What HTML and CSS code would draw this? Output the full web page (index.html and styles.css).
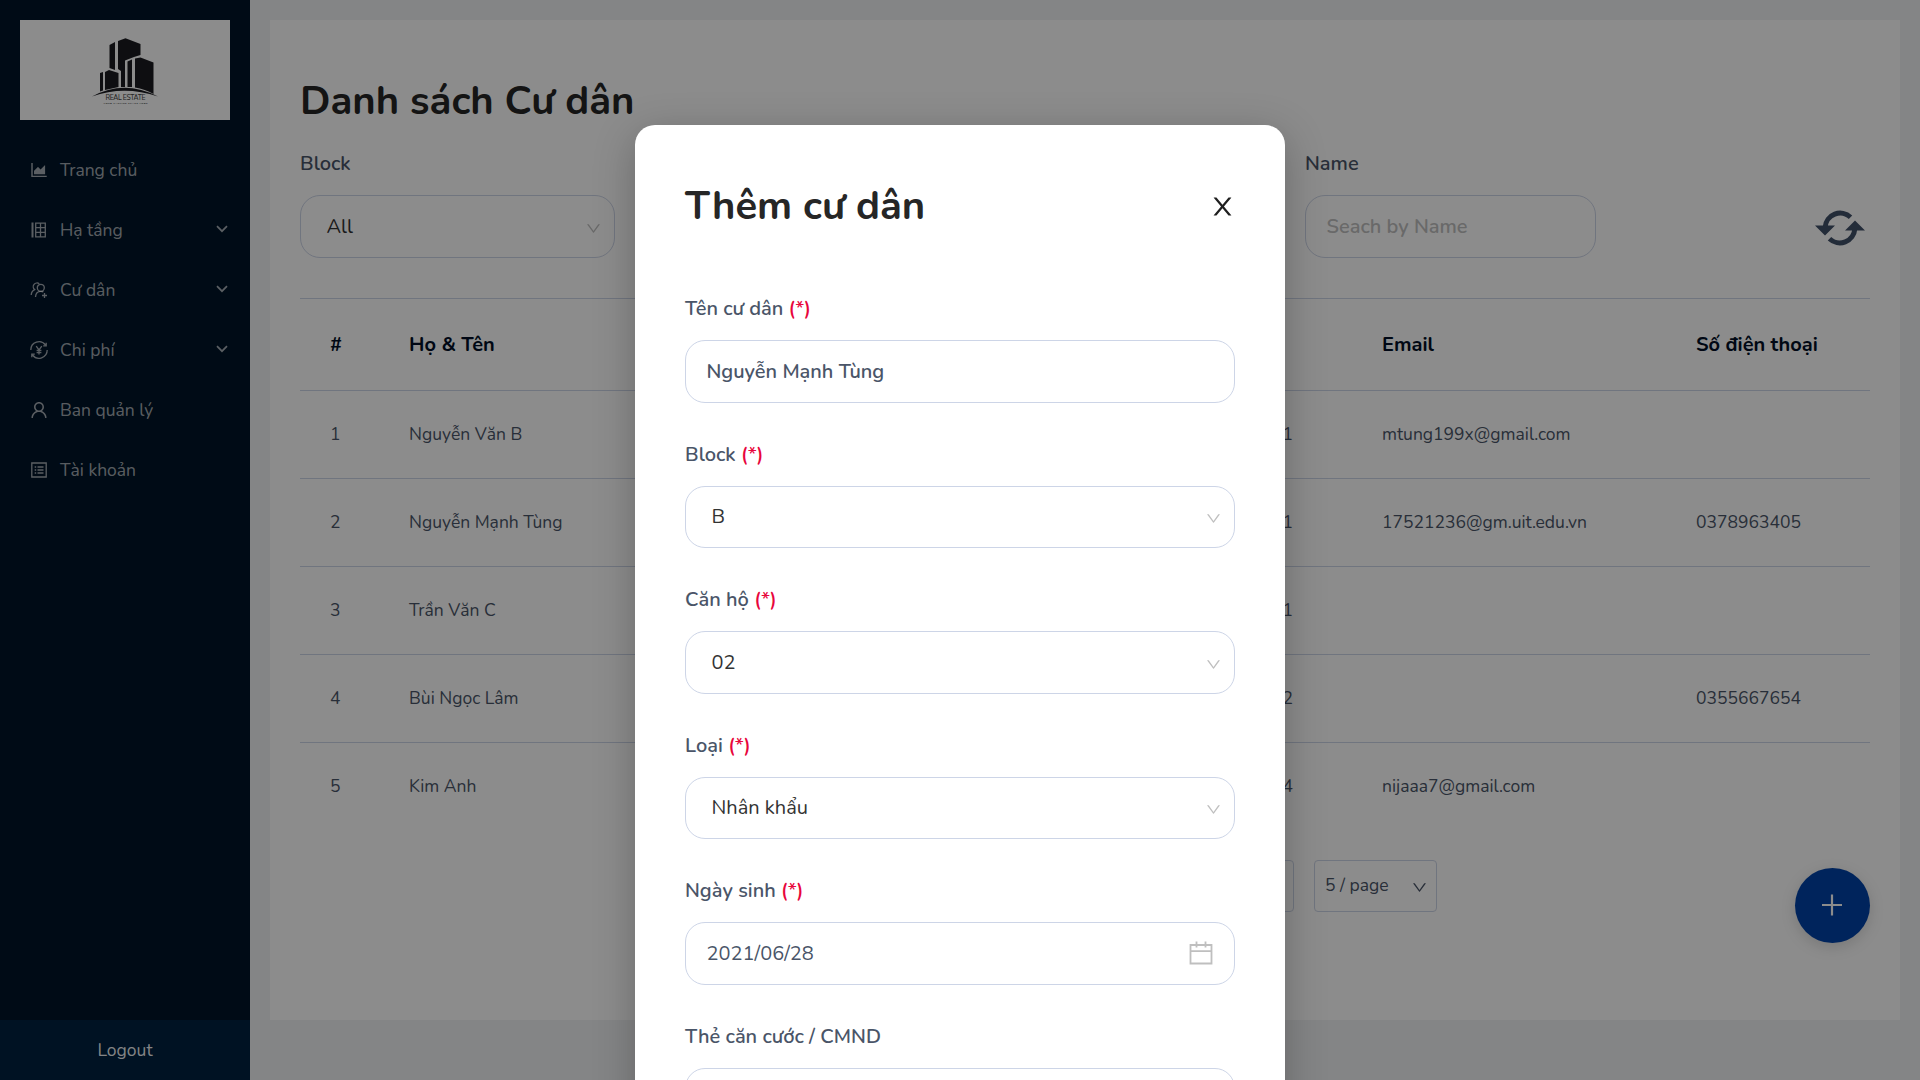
FILE: index.html
```html
<!DOCTYPE html>
<html lang="vi">
<head>
<meta charset="utf-8">
<title>Danh sách Cư dân</title>
<link rel="stylesheet" href="styles.css">
</head>
<body>
<svg class="defs" width="0" height="0">
  <symbol id="down" viewBox="64 64 896 896"><path d="M884 256h-75c-5.1 0-9.9 2.5-12.9 6.6L512 654.2 227.9 262.6c-3-4.1-7.8-6.6-12.9-6.6h-75c-6.5 0-10.3 7.4-6.5 12.7l352.6 486.1c12.8 17.6 39 17.6 51.7 0l352.6-486.1c3.9-5.3.1-12.7-6.4-12.7z"/></symbol>
  <symbol id="caret" viewBox="0 0 12 8"><path d="M1 1.2 6 6.2 11 1.2" fill="none" stroke="currentColor" stroke-width="1.700"/></symbol>
</svg>
<div class="app">
  <aside class="sidebar">
    <div class="logo">
      <svg width="68" height="68" viewBox="0 0 68 68">
        <g fill="#1b1b20">
          <path d="M17.500 8 23 5V33L17.500 31z"/><path d="M26 4 33.500 1.200 48.500 7V18L42 20 33 23.500V50H29V34L26 32z"/>
          <path d="M8 36 11 35V53.500L8 54.500z"/><path d="M13 35 17 33 26.500 36V50L13 53z"/>
          <path d="M35.500 24.500 40 22.500V50H35.500z"/><path d="M43 21.500 48.500 20.500 61.500 25.500V57Q53 52 43 50.500z"/>
          <path d="M0 59.500Q32 42 66 59.500Q32 48 0 59.500z"/>
        </g>
        <text class="logo-name" x="33.500" y="62.800" text-anchor="middle" textLength="40">REAL ESTATE</text>
        <text class="logo-tag" x="33.500" y="66.500" text-anchor="middle" textLength="44">YOUR TAGLINE SPACE HERE</text>
      </svg>
    </div>
    <nav class="menu">
      <div class="item"><svg class="mi" viewBox="64 64 896 896"><path d="M888 792H200V168c0-4.400-3.600-8-8-8h-56c-4.400 0-8 3.600-8 8v688c0 4.400 3.600 8 8 8h752c4.400 0 8-3.600 8-8v-56c0-4.400-3.600-8-8-8zm-616-64h536c4.400 0 8-3.600 8-8V284c0-7.200-8.700-10.700-13.700-5.700L592 488.600l-125.400-124a8.030 8.030 0 00-11.300 0l-189 189.600a7.870 7.870 0 00-2.300 5.600V720c0 4.400 3.600 8 8 8z"/></svg><span>Trang chủ</span></div>
      <div class="item"><svg class="mi line" viewBox="0 0 18 18"><path d="M2.500 1.500v15" stroke-width="2"/><path d="M5.700 2.200h9.600v13.600H5.700zM10.500 2.200v13.600M5.700 6.700h9.600M5.700 11.300h9.600"/></svg><span>Hạ tầng</span><svg class="arrow"><use href="#caret"/></svg></div>
      <div class="item"><svg class="mi line" viewBox="0 0 18 18"><circle cx="10.800" cy="6.800" r="3.500"/><path d="M5.500 16c.2-3.300 2.300-5.700 5.300-5.700 1 0 2 .3 2.600.8M1.200 14c.2-2.700 1.400-4.400 3.500-5.300A3.500 3.500 0 1 1 9.300 2.800M14.500 12v5M12 14.500h5"/></svg><span>Cư dân</span><svg class="arrow"><use href="#caret"/></svg></div>
      <div class="item"><svg class="mi line" viewBox="0 0 18 18"><path d="M.8 9A8.200 8.200 0 0 1 15.500 4M17.200 9A8.200 8.200 0 0 1 2.500 14M16.200 1.800v3h-3M1.800 16.200v-3h3M6.200 5.200 9 9l2.800-3.800M9 9v4.500M6.600 9.300h4.800M6.600 11.500h4.800"/></svg><span>Chi phí</span><svg class="arrow"><use href="#caret"/></svg></div>
      <div class="item"><svg class="mi" viewBox="64 64 896 896"><path d="M858.500 763.600a374 374 0 00-80.600-119.500 375.630 375.630 0 00-119.500-80.600c-.4-.2-.8-.3-1.200-.5C719.500 518 760 444.700 760 362c0-137-111-248-248-248S264 225 264 362c0 82.700 40.500 156 102.800 201.100-.4.2-.8.3-1.200.5-44.800 18.900-85 46-119.500 80.600a375.630 375.630 0 00-80.600 119.500A371.700 371.700 0 00136 901.800a8 8 0 008 8.200h60c4.400 0 7.900-3.500 8-7.800 2-77.200 33-149.500 87.800-204.300 56.700-56.700 132-87.900 212.200-87.900s155.500 31.200 212.200 87.900C779 752.700 810 825 812 902.200c.1 4.400 3.600 7.800 8 7.800h60a8 8 0 008-8.200c-1-47.800-10.900-94.300-29.500-138.200zM512 534c-45.900 0-89.100-17.900-121.600-50.400S340 407.900 340 362c0-45.900 17.900-89.100 50.400-121.600S466.100 190 512 190s89.100 17.900 121.600 50.400S684 316.100 684 362c0 45.900-17.900 89.100-50.400 121.600S557.900 534 512 534z"/></svg><span>Ban quản lý</span></div>
      <div class="item"><svg class="mi line" viewBox="0 0 18 18"><path d="M1.800 2h14.400v14H1.800zM7.500 6h6M7.500 9h6M7.500 12h6M4.700 6h1.500M4.700 9h1.500M4.700 12h1.500"/></svg><span>Tài khoản</span></div>
    </nav>
    <div class="logout">Logout</div>
  </aside>
  <main class="main">
    <h1 class="title">Danh sách Cư dân</h1>
    <div class="filters">
      <div class="filter block"><div class="label">Block</div><div class="box select"><span>All</span><svg class="chev"><use href="#down"/></svg></div></div>
      <div class="filter name"><div class="label">Name</div><div class="box placeholder">Seach by Name</div></div>
      <svg class="refresh" viewBox="0 0 50 36"><g fill="none" stroke="currentColor" stroke-width="5"><path d="M10.200 17A15 15 0 0 1 35.500 7.200"/><path d="M39.800 19A15 15 0 0 1 14.500 28.800"/></g><path d="M0 15.500h20L10 25.500zM30 20.500h20L40 10.500z"/></svg>
    </div>
    <div class="table">
      <div class="row head"><span>#</span><span>Họ &amp; Tên</span><span></span><span>Email</span><span>Số điện thoại</span></div>
      <div class="row"><span>1</span><span>Nguyễn Văn B</span><span>A-01</span><span>mtung199x@gmail.com</span><span></span></div>
      <div class="row"><span>2</span><span>Nguyễn Mạnh Tùng</span><span>A-01</span><span>17521236@gm.uit.edu.vn</span><span>0378963405</span></div>
      <div class="row"><span>3</span><span>Trần Văn C</span><span>A-01</span><span></span><span></span></div>
      <div class="row"><span>4</span><span>Bùi Ngọc Lâm</span><span>A-02</span><span></span><span>0355667654</span></div>
      <div class="row"><span>5</span><span>Kim Anh</span><span>A-04</span><span>nijaaa7@gmail.com</span><span></span></div>
    </div>
    <div class="pager"><div class="next"></div><div class="size"><span>5 / page</span><svg class="chev"><use href="#down"/></svg></div></div>
    <div class="fab"><svg width="20" height="22" viewBox="0 0 20 22"><path d="M0 11h20M10 .5v21" stroke="currentColor" stroke-width="2.200"/></svg></div>
  </main>
</div>
<div class="mask">
  <section class="modal">
    <header class="modal-head"><h2>Thêm cư dân</h2><svg class="close" viewBox="64 64 896 896"><path d="M563.800 512l262.500-312.900c4.400-5.200.7-13.100-6.100-13.100h-79.800c-4.700 0-9.200 2.100-12.300 5.700L511.600 449.800 295.100 191.700c-3-3.600-7.500-5.700-12.300-5.700H203c-6.800 0-10.500 7.900-6.100 13.100L459.400 512 196.900 824.900A7.950 7.950 0 00203 838h79.800c4.700 0 9.200-2.100 12.300-5.700l216.500-258.100 216.500 258.100c3 3.600 7.500 5.700 12.300 5.700h79.800c6.800 0 10.500-7.900 6.100-13.100L563.800 512z"/></svg></header>
    <div class="field"><div class="label">Tên cư dân <b>(*)</b></div><div class="box input">Nguyễn Mạnh Tùng</div></div>
    <div class="field"><div class="label">Block <b>(*)</b></div><div class="box select"><span>B</span><svg class="chev"><use href="#down"/></svg></div></div>
    <div class="field"><div class="label">Căn hộ <b>(*)</b></div><div class="box select apartment"><span>02</span><svg class="chev"><use href="#down"/></svg></div></div>
    <div class="field"><div class="label">Loại <b>(*)</b></div><div class="box select"><span>Nhân khẩu</span><svg class="chev"><use href="#down"/></svg></div></div>
    <div class="field"><div class="label">Ngày sinh <b>(*)</b></div><div class="box date"><span>2021/06/28</span><svg class="cal" viewBox="0 0 24 24"><path d="M1.500 4h21v18.500h-21zM1.500 10.200h21M7.500 .5v6M16.500 .5v6" fill="none" stroke="currentColor" stroke-width="1.800"/></svg></div></div>
    <div class="field"><div class="label">Thẻ căn cước / CMND</div><div class="box input"></div></div>
  </section>
</div>
</body>
</html>
```
FILE: styles.css
```css
* { box-sizing: border-box; }
body { margin: 0; height: 1080px; overflow: hidden; background: #f0f2f5; color: #4a5568; font-family: Nunito, Lato, "Open Sans", sans-serif; font-size: 20px; }
.defs { display: block; height: 0; }
svg { fill: currentColor; flex: none; }
h1, h2 { margin: 0; font-size: 40px; font-weight: 700; color: #262626; white-space: nowrap; }

.app { display: flex; height: 1080px; }

/* Sidebar */
.sidebar { width: 250px; display: flex; flex-direction: column; background: #001529; color: rgba(255,255,255,.65); font-size: 17.5px; }
.logo { height: 100px; margin: 20px 20px 0; padding: 17px 0 0 72px; background: #fff; }
.logo-name { font-size: 6.800px; font-weight: 500; fill: #444; }
.logo-tag { font-size: 2.600px; font-weight: 700; fill: #444; }
.menu { flex: 1; padding-top: 25px; display: flex; flex-direction: column; gap: 10px; }
.item { height: 50px; padding: 0 22px 0 30px; display: flex; align-items: center; }
.item span { flex: 1; line-height: 50px; }
.mi { width: 18px; height: 18px; margin-right: 12px; }
.line { fill: none; stroke: currentColor; stroke-width: 1.300; }
.arrow { width: 12px; height: 8px; margin-top: -2px; }
.logout { height: 60px; line-height: 60px; background: #002140; text-align: center; color: rgba(255,255,255,.95); }

/* Resident list */
.main { width: 1630px; height: 1000px; margin: 20px; padding: 0 30px; background: #fff; position: relative; }
.title { padding-top: 51px; line-height: 60px; }
.label { font-size: 20px; line-height: 30px; font-weight: 600; white-space: nowrap; }
.box { height: 63px; border: 1px solid #cdd5e7; border-radius: 20px; line-height: 60px; padding: 0 20.500px; display: flex; align-items: center; color: #4a5568; }
.box.input { font-weight: 600; }
.select { padding: 0 13px 0 25.500px; justify-content: space-between; color: #333; }
.chev { width: 15px; height: 15px; color: #bfbfbf; margin-top: 3px; }
.filters { display: flex; padding-top: 18px; height: 167px; }
.filter .label { margin-bottom: 16px; }
.block { width: 315px; }
.name { width: 291px; margin-left: 690px; }
.placeholder { font-weight: 600; color: #bfbfbf; }
.refresh { width: 50px; height: 36px; margin: 61px 5px 0 auto; color: #415068; }
.row { display: grid; grid-template-columns: 79px 763px 210px 314px 1fr; height: 88px; padding: 0 0 2px 30px; align-items: center; border-top: 1px solid #cdd5e7; font-size: 17.5px; white-space: nowrap; }
.row.head { height: 92px; padding-bottom: 0; font-size: 20px; font-weight: 700; color: #000e26; }
.row > span:nth-child(3) { padding-right: 89px; text-align: right; }
.pager { display: flex; gap: 20px; padding: 30px 433px 0 0; justify-content: flex-end; }
.next, .size { height: 52px; border: 1px solid #cdd5e7; border-radius: 4px; }
.next { width: 51px; }
.size { width: 123px; padding: 0 9px 0 10px; display: flex; align-items: center; justify-content: space-between; font-size: 17.5px; }
.size span { padding-bottom: 2px; }
.size .chev { color: #4a5568; }
.fab { position: absolute; right: 30px; top: 848px; width: 75px; height: 75px; padding: 0 1px 1px 0; border-radius: 50%; background: #0042a8; color: #fff; display: flex; align-items: center; justify-content: center; box-shadow: 0 4px 15px rgba(0,0,0,.15); }

/* Add resident dialog */
.mask { position: absolute; left: 0; top: 0; width: 1920px; height: 1080px; overflow: hidden; background: rgba(0,0,0,.45); padding-top: 125px; }
.modal { width: 650px; height: 1100px; margin: 0 auto; padding: 51px 50px; background: #fff; border-radius: 20px; box-shadow: 0 10px 40px rgba(0,0,0,.25); }
.modal-head { display: flex; justify-content: space-between; align-items: center; height: 60px; margin-bottom: 58px; line-height: 60px; }
.close { width: 25px; height: 25px; color: #1f1f1f; margin-top: 1px; }
.field { height: 145.600px; }
.field .label { margin-bottom: 16px; }
.field .select { height: 62.500px; }
.field .apartment { height: 63px; padding-top: 1px; }
.field b { font-weight: 600; color: #e8063c; }
.date { justify-content: space-between; padding-right: 21px; }
.cal { width: 24px; height: 24px; color: #bfbfbf; margin-top: -1px; }
```
